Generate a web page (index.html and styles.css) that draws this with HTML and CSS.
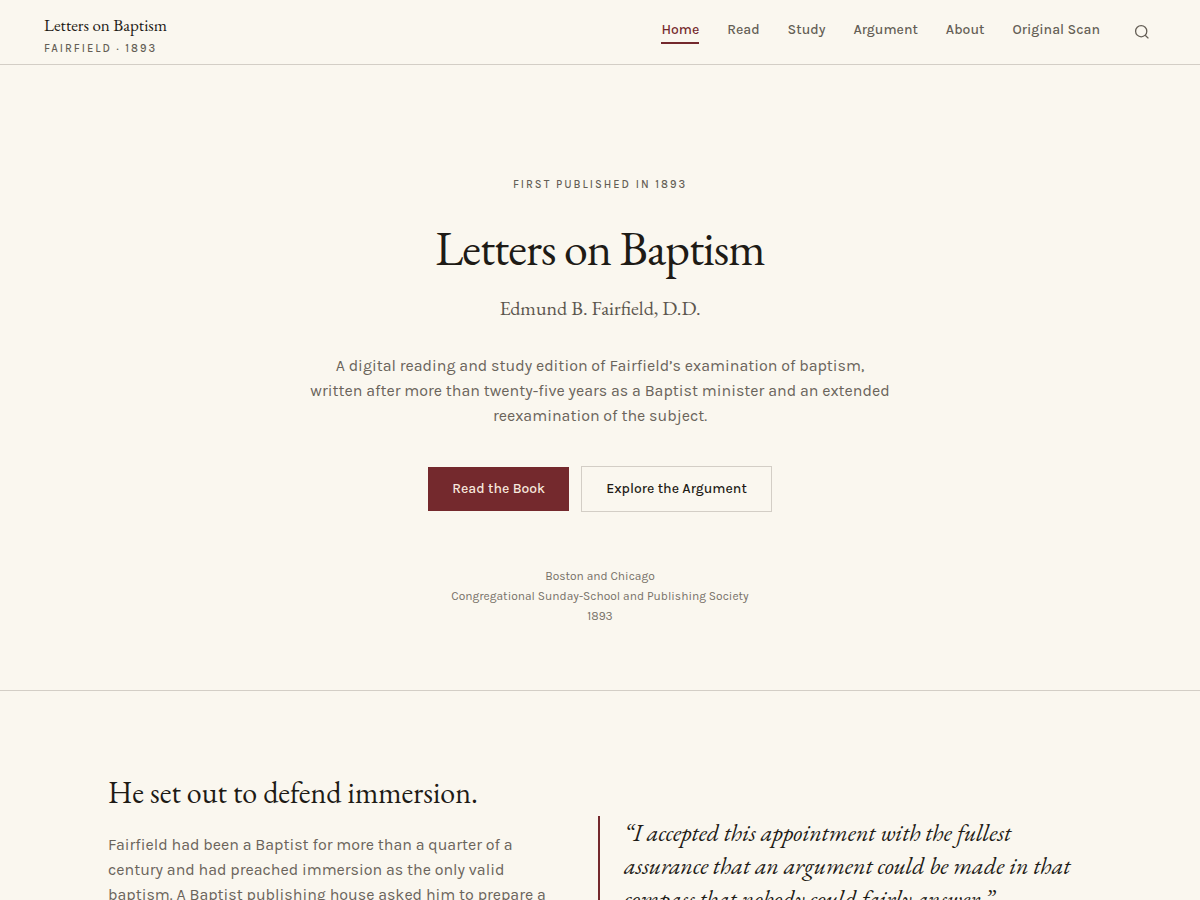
FILE: index.html
```
<!DOCTYPE html>
<html lang="en">
<head>
    <meta charset="UTF-8">
    <meta name="viewport" content="width=device-width, initial-scale=1.0">
    <title>Letters on Baptism</title>
    <link rel="stylesheet" href="styles.css">
</head>
<body>
    <header class="site-header">
        <a class="brand" href="#">
            <span class="brand-title">Letters on Baptism</span>
            <span class="brand-sub">Fairfield · 1893</span>
        </a>
        <nav class="site-nav" aria-label="Main">
            <a class="active" href="#" aria-current="page">Home</a>
            <a href="#read">Read</a>
            <a href="#study">Study</a>
            <a href="#argument">Argument</a>
            <a href="#about">About</a>
            <a href="#scan">Original Scan</a>
            <button class="search" type="button" aria-label="Search">
                <svg width="16" height="16" viewBox="0 0 16 16" fill="none" stroke="currentColor" stroke-width="1.3">
                    <circle cx="7.2" cy="7.2" r="5.6"/>
                    <path d="M11.2 11.2L14.4 14.4"/>
                </svg>
            </button>
        </nav>
    </header>

    <main>
        <section class="hero">
            <p class="eyebrow">First published in 1893</p>
            <h1>Letters on Baptism</h1>
            <p class="author">Edmund B. Fairfield, D.D.</p>
            <p class="lead">A digital reading and study edition of Fairfield’s examination of baptism,<br>
                written after more than twenty-five years as a Baptist minister and an extended<br>
                reexamination of the subject.</p>
            <div class="actions">
                <a class="btn btn-primary" href="#read">Read the Book</a>
                <a class="btn btn-outline" href="#argument">Explore the Argument</a>
            </div>
            <p class="imprint">Boston and Chicago<br>
                Congregational Sunday-School and Publishing Society<br>
                1893</p>
        </section>

        <section class="intro">
            <div class="intro-text">
                <h2>He set out to defend immersion.</h2>
                <p>Fairfield had been a Baptist for more than a quarter of a<br>
                    century and had preached immersion as the only valid<br>
                    baptism. A Baptist publishing house asked him to prepare a</p>
            </div>
            <blockquote>“I accepted this appointment with the fullest<br>
                assurance that an argument could be made in that<br>
                compass that nobody could fairly answer.”</blockquote>
        </section>
    </main>
</body>
</html>
```
FILE: styles.css
```
* {
    box-sizing: border-box;
}
body {
    margin: 0;
    background-color: #faf7ef;
    color: #1e1b16;
    font-family: Karla, Roboto, "Liberation Sans", sans-serif;
    font-size: 16px;
    line-height: 25px;
}
h1, h2, p, blockquote {
    margin: 0;
}
h1, h2, blockquote, .brand-title, .author {
    font-family: "EB Garamond", "Liberation Serif", serif;
    font-weight: normal;
}
a {
    color: inherit;
    text-decoration: none;
}

/* Header */
.site-header {
    display: flex;
    align-items: center;
    justify-content: space-between;
    height: 65px;
    padding: 0 44px;
    border-bottom: 1px solid #d3cec6;
}
.brand {
    display: flex;
    flex-direction: column;
    padding-top: 6px;
}
.brand-title {
    font-size: 17px;
    line-height: 28px;
}
.brand-sub, .eyebrow {
    color: #645e55;
    font-size: 11px;
    font-weight: 500;
    line-height: 14px;
    letter-spacing: 2px;
    text-transform: uppercase;
}
.brand-sub {
    line-height: 20px;
}
.site-nav {
    display: flex;
    align-items: center;
    gap: 28px;
    color: #645e55;
    font-size: 14px;
    font-weight: 500;
    line-height: 20px;
}
.site-nav a {
    padding-bottom: 2px;
    border-bottom: 2px solid transparent;
}
.site-nav a.active {
    color: #74292d;
    border-color: #74292d;
}
.search {
    display: flex;
    align-items: center;
    justify-content: center;
    width: 28px;
    height: 28px;
    padding: 0;
    border: none;
    background: none;
    color: inherit;
    cursor: pointer;
}

/* Hero */
.hero {
    padding: 113px 44px 64px;
    border-bottom: 1px solid #d3cec6;
    text-align: center;
}
h1 {
    margin-top: 30px;
    font-size: 48px;
    line-height: 52px;
    letter-spacing: -1px;
}
.author {
    margin-top: 20px;
    color: #5c564e;
    font-size: 20px;
    line-height: 28px;
}
.lead {
    margin-top: 31px;
    color: #6a645b;
}
.actions {
    display: flex;
    align-items: center;
    justify-content: center;
    gap: 12px;
    margin-top: 38px;
}
.btn {
    padding: 12px 24px;
    font-size: 14px;
    font-weight: 500;
    line-height: 20px;
}
.btn-primary {
    background-color: #74292d;
    color: #f8e9df;
}
.btn-outline {
    border: 1px solid #d3cec6;
}
.imprint {
    margin-top: 54px;
    color: #777168;
    font-size: 12px;
    line-height: 20px;
}

/* Intro */
.intro {
    display: grid;
    grid-template-columns: 442px 1fr;
    gap: 48px;
    max-width: 1072px;
    margin: 0 auto;
    padding: 84px 44px 0;
}
h2 {
    font-size: 30px;
    line-height: 36px;
}
.intro-text p {
    margin-top: 21px;
    color: #6a645b;
}
blockquote {
    margin-top: 41px;
    padding-left: 24px;
    border-left: 2px solid #74292d;
    font-size: 24px;
    font-style: italic;
    line-height: 33px;
}
```
